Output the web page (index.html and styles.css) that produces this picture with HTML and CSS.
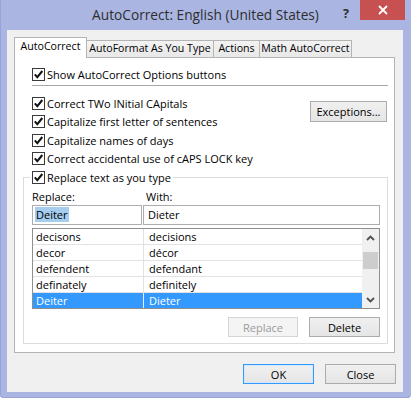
FILE: index.html
```html
<!DOCTYPE html>
<html lang="en">
<head>
<meta charset="utf-8">
<title>AutoCorrect: English (United States)</title>
<link rel="stylesheet" href="styles.css">
</head>
<body>
<div class="window">
  <div class="titlebar">
    <span class="tb-spacer"></span>
    <div class="title">AutoCorrect: English (United States)</div>
    <div class="caption-btns">
      <span class="help">?</span>
      <span class="close"><svg width="10" height="10" viewBox="0 0 10 10"><path d="M1 1 L9 9 M9 1 L1 9" stroke="#fff" stroke-width="1.8" fill="none"/></svg></span>
    </div>
  </div>
  <div class="client">
    <div class="tabs">
      <div class="tab active">AutoCorrect</div>
      <div class="tab t-format">AutoFormat As You Type</div>
      <div class="tab t-actions">Actions</div>
      <div class="tab t-math">Math AutoCorrect</div>
    </div>
    <div class="panel">
      <div class="check-row top-row"><span class="cb"><svg width="11" height="11" viewBox="0 0 11 11"><path d="M1.8 5.4 L4.3 8.2 L9.3 2" stroke="#111" stroke-width="2" fill="none"/></svg></span>Show AutoCorrect Options buttons</div>
      <div class="sep"></div>
      <div class="options">
        <div class="opt-list">
          <div class="check-row"><span class="cb"><svg width="11" height="11" viewBox="0 0 11 11"><path d="M1.8 5.4 L4.3 8.2 L9.3 2" stroke="#111" stroke-width="2" fill="none"/></svg></span>Correct TWo INitial CApitals</div>
          <div class="check-row"><span class="cb"><svg width="11" height="11" viewBox="0 0 11 11"><path d="M1.8 5.4 L4.3 8.2 L9.3 2" stroke="#111" stroke-width="2" fill="none"/></svg></span>Capitalize first letter of sentences</div>
          <div class="check-row"><span class="cb"><svg width="11" height="11" viewBox="0 0 11 11"><path d="M1.8 5.4 L4.3 8.2 L9.3 2" stroke="#111" stroke-width="2" fill="none"/></svg></span>Capitalize names of days</div>
          <div class="check-row"><span class="cb"><svg width="11" height="11" viewBox="0 0 11 11"><path d="M1.8 5.4 L4.3 8.2 L9.3 2" stroke="#111" stroke-width="2" fill="none"/></svg></span>Correct accidental use of cAPS LOCK key</div>
        </div>
        <button class="btn exceptions">Exceptions...</button>
      </div>
      <fieldset class="group">
        <legend class="check-row legend-row"><span class="cb"><svg width="11" height="11" viewBox="0 0 11 11"><path d="M1.8 5.4 L4.3 8.2 L9.3 2" stroke="#111" stroke-width="2" fill="none"/></svg></span>Replace text as you type</legend>
        <div class="fields">
          <div class="lbl">Replace:</div>
          <div class="lbl lbl-with">With:</div>
          <div class="input input-replace"><span class="sel">Deiter</span></div>
          <div class="input input-with">Dieter</div>
        </div>
        <div class="list">
          <div class="rows">
            <div class="row"><span class="c1">decisons</span><span class="c2">decisions</span></div>
            <div class="row"><span class="c1">decor</span><span class="c2">décor</span></div>
            <div class="row"><span class="c1">defendent</span><span class="c2">defendant</span></div>
            <div class="row"><span class="c1">definately</span><span class="c2">definitely</span></div>
            <div class="row selected"><span class="c1">Deiter</span><span class="c2">Dieter</span></div>
          </div>
          <div class="scrollbar">
            <div class="sb-btn"><svg width="9" height="6" viewBox="0 0 9 6"><path d="M1 5 L4.5 1.5 L8 5" stroke="#505050" stroke-width="1.8" fill="none"/></svg></div>
            <div class="sb-track"><div class="sb-thumb"></div></div>
            <div class="sb-btn"><svg width="9" height="6" viewBox="0 0 9 6"><path d="M1 1 L4.5 4.5 L8 1" stroke="#505050" stroke-width="1.8" fill="none"/></svg></div>
          </div>
        </div>
        <div class="group-btns">
          <button class="btn disabled" disabled>Replace</button>
          <button class="btn">Delete</button>
        </div>
      </fieldset>
    </div>
    <div class="dialog-btns">
      <button class="btn default">OK</button>
      <button class="btn">Close</button>
    </div>
  </div>
</div>
</body>
</html>
```
FILE: styles.css
```css
* { box-sizing: border-box; }
html, body { margin: 0; padding: 0; background: #fff; }
body {
  font-family: "Open Sans", "Noto Sans", sans-serif;
  font-size: 11px;
  color: #000;
}
.window {
  width: 411px;
  height: 398px;
  background: #aab5e2;
  border-radius: 0 0 4px 4px;
  box-shadow: inset 1px 0 0 #97a4d8, inset 0 -1px 0 #97a4d8;
  display: flex;
  flex-direction: column;
}
.titlebar {
  height: 30px;
  display: grid;
  grid-template-columns: 1fr auto 1fr;
}
.title {
  font-size: 13.7px;
  line-height: 29px;
  color: #2e2e2e;
  white-space: nowrap;
}
.caption-btns {
  justify-self: end;
  display: flex;
  align-items: flex-start;
}
.help {
  font-weight: bold;
  font-size: 12.5px;
  line-height: 13px;
  margin-top: 7px;
  margin-right: 11px;
  color: #2e2e2e;
}
.close {
  width: 45px;
  height: 20px;
  background: #c75050;
  margin-right: 6px;
  display: flex;
  align-items: center;
  justify-content: center;
}
.client {
  margin: 0 8px 0 7px;
  height: 362px;
  background: #f0f0f0;
  padding: 7px 0 0 7px;
}
.tabs {
  display: flex;
  align-items: flex-end;
  height: 20px;
  font-size: 10.6px;
}
.tab {
  height: 17px;
  border: 1px solid #b4b4b4;
  border-bottom: none;
  background: linear-gradient(#f3f3f3, #e8e8e8);
  margin-left: -1px;
  text-align: center;
  line-height: 15px;
  white-space: nowrap;
}
.tab.active {
  height: 21px;
  margin-left: 0;
  margin-bottom: -1px;
  background: #fff;
  position: relative;
  z-index: 1;
  width: 73px;
  line-height: 17px;
}
.t-format { width: 128px; }
.t-actions { width: 47px; }
.t-math { width: 93px; }
.panel {
  width: 381px;
  background: #fff;
  border: 1px solid #b4b4b4;
  padding: 7px 6px 8px 8px;
}
.check-row {
  display: flex;
  align-items: center;
  height: 18.5px;
  white-space: nowrap;
}
.top-row { height: 18px; margin-left: 9px; }
.cb {
  width: 13px;
  height: 13px;
  border: 1px solid #3a3a3a;
  background: #fff;
  margin-right: 2px;
  display: flex;
  align-items: center;
  justify-content: center;
  flex: none;
}
.sep {
  margin: 2px 0 8px 9px;
  border-top: 1px solid #a8a8a8;
}
.options {
  display: flex;
  justify-content: space-between;
  align-items: flex-start;
  margin-left: 9px;
}
.btn {
  font-family: inherit;
  font-size: 11px;
  color: #000;
  height: 20px;
  width: 71px;
  padding: 0;
  border: 1px solid #acacac;
  background: linear-gradient(#f0f0f0, #e5e5e5);
  line-height: 17px;
}
.exceptions {
  width: 77px;
  height: 21px;
  margin-top: 7px;
  margin-right: 1px;
}
.group {
  margin: 0;
  border: 1px solid #dcdcdc;
  padding: 2px 7px 6px 8px;
}
.legend-row {
  padding: 0 2px;
  margin-left: -2px;
}
.fields {
  display: grid;
  grid-template-columns: 111px 1fr;
}
.lbl {
  height: 16px;
  line-height: 16px;
}
.lbl-with { padding-left: 3px; }
.input {
  height: 20px;
  border: 1px solid #abadb3;
  background: #fff;
  line-height: 18px;
}
.input-replace { width: 110px; padding-left: 2px; }
.input-with { padding-left: 4px; }
.sel {
  background: #a4cdf0;
  padding: 0 1px;
}
.list {
  margin-top: 3.5px;
  height: 81px;
  border: 1px solid #8e8f8f;
  display: flex;
  background: #fff;
}
.rows {
  flex: 1;
  overflow: hidden;
}
.row {
  height: 16px;
  display: grid;
  grid-template-columns: 111px 1fr;
  border-bottom: 1px solid #e2e2e2;
  line-height: 15px;
}
.c1 { padding-left: 3px; border-right: 1px solid #e2e2e2; }
.c2 { padding-left: 5px; }
.row.selected { background: #3399ff; color: #fff; border-bottom: none; }
.row.selected .c1 { border-right-color: #e6f1ff; }
.scrollbar {
  width: 17px;
  background: #f0f0f0;
  display: flex;
  flex-direction: column;
}
.sb-btn {
  height: 17px;
  display: flex;
  align-items: center;
  justify-content: center;
}
.sb-track { flex: 1; }
.sb-thumb {
  margin: 6px 1px 0 1px;
  height: 17px;
  background: #cdcdcd;
}
.group-btns {
  display: flex;
  justify-content: flex-end;
  gap: 11px;
  margin-top: 8px;
}
.group-btns .btn:first-child { width: 70px; }
.btn.disabled {
  color: #9a9a9a;
  background: #f4f4f4;
  border-color: #d5d5d5;
}
.dialog-btns {
  display: flex;
  justify-content: flex-end;
  gap: 11px;
  margin-top: 11px;
  padding-right: 7px;
}
.btn.default {
  border-color: #3399ff;
  box-shadow: inset 0 0 0 1px #d4e8fb;
}
```
